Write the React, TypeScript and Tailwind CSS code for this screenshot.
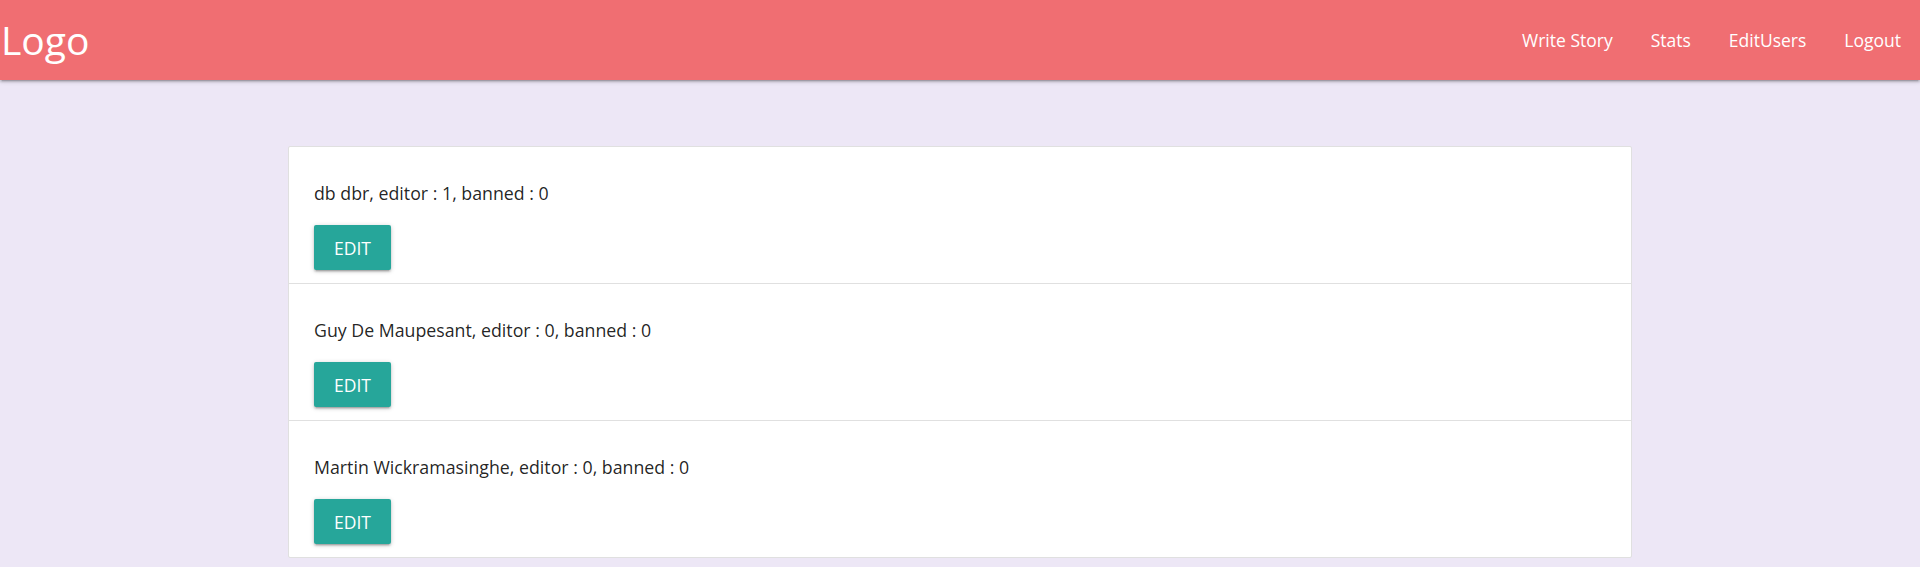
const users = [
  { name: "db dbr", editor: 1, banned: 0 },
  { name: "Guy De Maupesant", editor: 0, banned: 0 },
  { name: "Martin Wickramasinghe", editor: 0, banned: 0 },
];

const links = ["Write Story", "Stats", "EditUsers", "Logout"];

const App = () => {
  return (
    <div className="min-h-[567px] bg-[#ede7f6] font-['Open_Sans',sans-serif] text-[rgba(0,0,0,0.87)]">
      <nav className="h-20 bg-[#f06e72] text-white flex justify-between items-center shadow-[0_2px_2px_0_rgba(0,0,0,0.14),0_3px_1px_-2px_rgba(0,0,0,0.12),0_1px_5px_0_rgba(0,0,0,0.2)]">
        <a className="text-[39px] leading-[80px] pl-[1px]">Logo</a>
        <ul className="flex">
          {links.map((l) => (
            <li key={l}>
              <a className="block px-[19px] text-[17.5px] leading-[80px]">{l}</a>
            </li>
          ))}
        </ul>
      </nav>
      <div className="w-[70%] mx-auto pt-[66px]">
        <ul className="bg-white border border-[#e0e0e0] rounded-[2px]">
          {users.map((u, i) => (
            <li
              key={u.name}
              className={`px-[25px] py-[12.75px] ${i > 0 ? "border-t border-[#e0e0e0]" : ""}`}
            >
              <p className="my-[18.75px] text-[17.75px] leading-[28px]">
                {u.name}, editor : {u.editor}, banned : {u.banned}
              </p>
              <button className="h-[45px] px-[20px] bg-[#26a69a] text-white text-[17.5px] uppercase rounded-[2px] shadow-[0_2px_2px_0_rgba(0,0,0,0.14),0_3px_1px_-2px_rgba(0,0,0,0.12),0_1px_5px_0_rgba(0,0,0,0.2)]">
                Edit
              </button>
            </li>
          ))}
        </ul>
      </div>
    </div>
  );
};

export default App;
